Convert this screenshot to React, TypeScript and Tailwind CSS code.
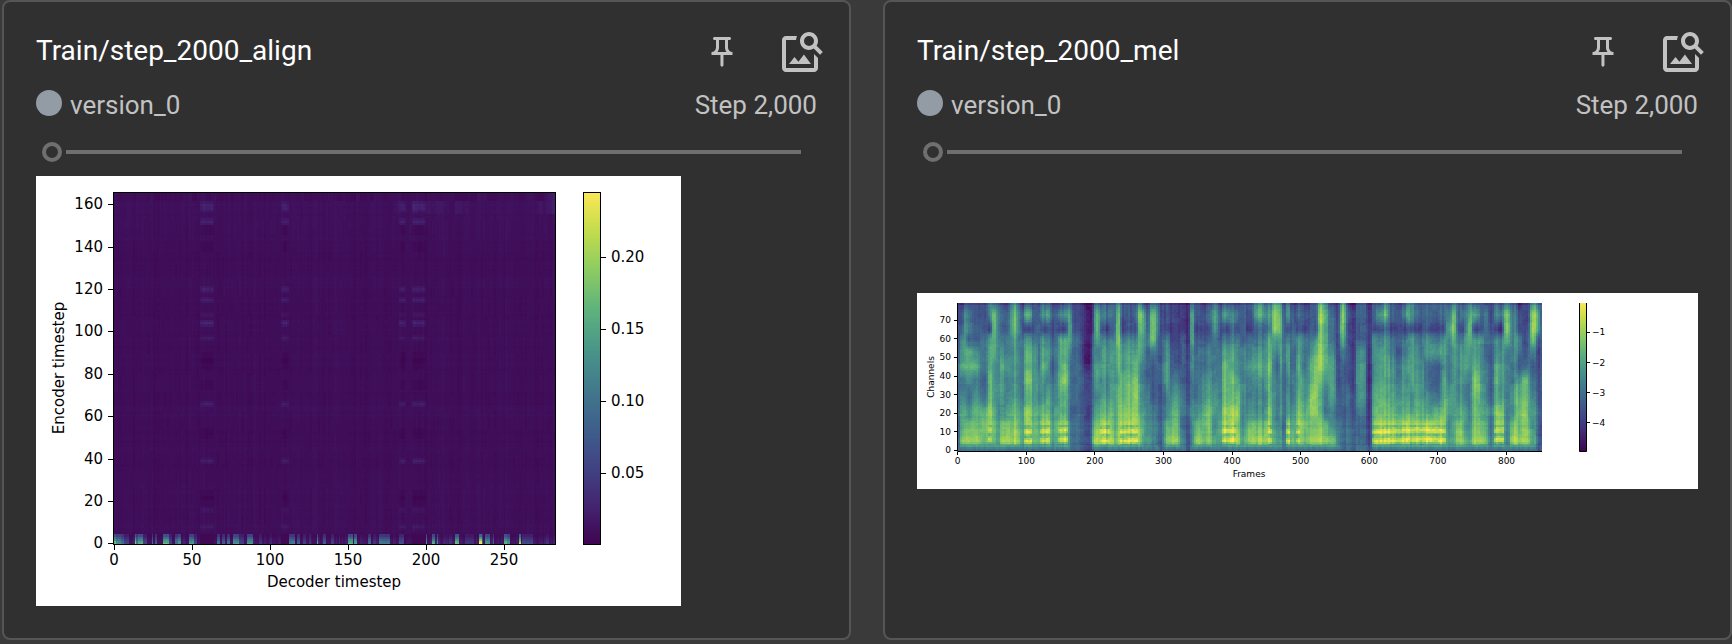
import React, { useId, useMemo, useState } from "react";

/* ---------- colour scale ---------- */

const SCALE = [
  [62, 5, 80],
  [68, 36, 113],
  [64, 68, 132],
  [63, 96, 139],
  [66, 122, 140],
  [73, 150, 137],
  [94, 178, 124],
  [139, 203, 99],
  [194, 220, 75],
  [250, 231, 85],
];
const LEVELS = 135;

function shade(value: number) {
  const v = Math.max(0, Math.min(8.999, value));
  const i = Math.floor(v);
  const t = v - i;
  const c = SCALE[i].map((a, k) => Math.round(a + (SCALE[i + 1][k] - a) * t));
  return `rgb(${c[0]},${c[1]},${c[2]})`;
}

function noise(a: number, b = 0) {
  const s = Math.sin(a * 127.1 + b * 311.7 + 17.3) * 43758.5453;
  return (s - Math.floor(s)) * 2 - 1;
}

type Cells = { cols: number; rows: number; at: (col: number, row: number) => number };

/* Cells are run-length merged and gathered in one path per colour level. */
function Heatmap({ x, y, width, height, cells }: { x: number; y: number; width: number; height: number; cells: Cells }) {
  const paths = useMemo(() => {
    const w = width / cells.cols;
    const h = height / cells.rows;
    const out = new Map<number, string[]>();
    for (let r = 0; r < cells.rows; r++) {
      let start = 0;
      let level = -1;
      for (let c = 0; c <= cells.cols; c++) {
        const v = c < cells.cols ? Math.max(0, Math.min(LEVELS, Math.round((cells.at(c, r) / 9) * LEVELS))) : -2;
        if (v !== level) {
          if (level >= 0) {
            if (!out.has(level)) out.set(level, []);
            const x0 = (x + start * w).toFixed(2);
            const x1 = (x + c * w).toFixed(2);
            out.get(level)!.push(`M${x0} ${(y + r * h).toFixed(2)}H${x1}v${h.toFixed(3)}H${x0}z`);
          }
          start = c;
          level = v;
        }
      }
    }
    return [...out.entries()];
  }, [x, y, width, height, cells]);

  return (
    <g shapeRendering="crispEdges">
      {paths.map(([level, d]) => (
        <path key={level} d={d.join("")} fill={shade((level / LEVELS) * 9)} />
      ))}
    </g>
  );
}

/* ---------- alignment data ---------- */

/* first step, last step, strength */
const PEAKS: number[][] = [
  [0, 1, 6.6], [2, 4, 5], [5, 6, 3.8], [7, 9, 2], [14, 14, 7.2], [15, 15, 4], [16, 18, 6], [19, 21, 2],
  [25, 25, 3.6], [27, 27, 3], [32, 35, 6.2], [36, 37, 2], [40, 41, 3.8], [42, 43, 5], [49, 51, 5], [52, 53, 2],
  [67, 68, 3.8], [70, 71, 3], [73, 74, 3.6], [77, 80, 5], [81, 83, 2], [86, 89, 5], [94, 95, 1.6],
  [101, 101, 1.4], [113, 116, 4], [118, 119, 3], [122, 123, 2], [126, 126, 1.6], [131, 131, 5.6], [135, 136, 3],
  [140, 141, 2], [145, 145, 1.5], [151, 153, 6], [155, 156, 5.6], [164, 165, 3.6], [167, 168, 1.6], [171, 177, 4],
  [184, 186, 2.5], [201, 201, 5], [205, 206, 5.7], [208, 208, 5], [212, 213, 1.2], [216, 217, 1.6],
  [220, 221, 6.6], [226, 231, 1.6], [235, 236, 8.8], [237, 237, 3], [239, 241, 5], [244, 244, 3.2],
  [251, 252, 6.2], [253, 254, 5], [261, 261, 8], [263, 269, 2.2], [278, 279, 1.5],
];
const PATCHES = [[56, 64], [108, 112], [184, 187], [192, 200]];
const GLOWS = [[8, 0.4], [16, 0.3], [39, 0.7], [66, 0.7], [97, 0.5], [104, 1], [108, 0.4], [115, 0.7], [120, 0.7], [152, 0.8], [158, 0.7], [160, 0.7]];
const SHADOWS = [20, 23, 52, 75, 85, 88, 140, 148];

const STRENGTH = Array.from({ length: 284 }, (_, c) => {
  const hit = PEAKS.find(([a, b]) => c >= a && c <= b);
  return hit ? hit[2] : 0.5 + Math.max(0, noise(c, 3)) * 0.6;
});

const alignment: Cells = {
  cols: 284,
  rows: 166,
  at: (c, r) => {
    const ch = 165 - r;
    const patch = PATCHES.find(([a, b]) => c >= a && c <= b);
    if (ch < 5) {
      if (patch && STRENGTH[c] < 2) return 0.1;
      const fade = [1, 0.9, 0.75, 0.55, 0.38][ch];
      return STRENGTH[c] * fade * (1 + noise(c, ch) * 0.08);
    }
    let v = 0.3 + noise(Math.floor(c / 2), 7) * 0.05 + noise(c, 1) * 0.05 + noise(ch, 50) * 0.03 + noise(Math.floor(ch / 6), 51) * 0.04;
    v += noise(c, Math.floor(ch / 9)) * 0.04;
    if (ch > 155 && ch < 162) v += 0.04 + (c > 180 ? Math.max(0, noise(Math.floor(c / 4), 9)) * 0.25 : 0);
    if (ch >= 162) v += noise(Math.floor(c / 3), 12) * 0.1 - 0.05;
    if (c > 276 && ch > 155) v += (c - 276) * 0.07;
    if (c === 201) v -= 0.15;
    if (patch) {
      const across = Math.min(c - patch[0], patch[1] - c) + 1;
      const edge = across === 1 ? 0.6 : 1;
      for (const [row, gain] of GLOWS) {
        const off = Math.abs(ch - row);
        if (off <= 1) v += gain * edge * (off === 0 ? 0.75 : 0.35) * (1 + noise(c, row) * 0.2);
      }
      for (const row of SHADOWS) if (Math.abs(ch - row) <= 2) v -= 0.15 * edge;
    }
    return v;
  },
};

/* ---------- spectrogram data ---------- */

/* right edge of a segment (thirds of a pixel from the axis), intensity from top to bottom */
const SEGMENTS: [number, string][] = [
  [7, "333344444444"], [17, "233566456784"], [25, "466666456784"], [42, "344366545784"], [67, "333356456784"],
  [89, "333444346774"], [102, "552666778884"], [115, "477665556774"], [127, "344444444554"], [139, "233456555784"],
  [157, "233445445784"], [172, "566555556784"], [187, "455455556784"], [197, "233444445664"], [224, "362566767884"],
  [239, "333455556774"], [247, "233333445564"], [262, "452566556884"], [277, "352455456884"], [300, "232343445664"],
  [329, "352666766884"], [345, "466654444554"], [372, "222333333443"], [400, "111111222332"], [410, "222454445784"],
  [427, "466545545784"], [455, "342455456884"], [467, "342455556784"], [475, "222344444564"], [485, "577766566784"],
  [527, "332455667884"], [543, "232456777884"], [555, "577665556784"], [567, "366554445664"], [579, "233433344564"],
  [593, "477743334554"], [607, "344333333444"], [619, "222333333443"], [635, "222455544674"], [667, "222233456784"],
  [685, "222333344454"], [697, "111112223332"], [707, "466655445554"], [732, "332344445784"], [762, "232344556774"],
  [782, "455444455564"], [795, "233344445664"], [817, "352456667884"], [832, "243455667884"], [849, "232444567784"],
  [865, "333344444564"], [887, "332445445784"], [917, "563456545784"], [932, "343455545784"], [944, "454667667884"],
  [965, "677543444564"], [972, "566556556564"], [982, "344444444454"], [999, "452455455884"], [1012, "233433445674"],
  [1027, "342556567884"], [1049, "232444556774"], [1067, "333456677784"], [1081, "332567777784"], [1099, "677777656784"],
  [1109, "566666544784"], [1132, "233345554574"], [1144, "222222233454"], [1162, "677643333443"], [1197, "122222233443"],
  [1227, "333355554444"], [1240, "222222222333"], [1257, "332555566884"], [1277, "352455566884"], [1292, "563555556884"],
  [1312, "332445556884"], [1332, "333434456884"], [1345, "342445556884"], [1357, "452445456884"], [1370, "553666656884"],
  [1397, "332445556884"], [1427, "332453345884"], [1453, "332453346884"], [1467, "332555667884"], [1482, "345444455564"],
  [1495, "577655555664"], [1507, "333444445784"], [1520, "342455556784"], [1532, "344555445564"], [1544, "567655444564"],
  [1567, "352556766784"], [1579, "332555556784"], [1593, "243334445674"], [1607, "222333334454"], [1622, "452556667884"],
  [1637, "341455557884"], [1655, "577644444554"], [1672, "344444455784"], [1692, "233543567784"], [1712, "222223667784"],
  [1719, "222344565784"], [1737, "577642345564"], [1749, "466322334443"], [1756, "333333333333"],
];
/* heights of the intensities above, in thirds of a pixel from the top */
const STOPS = [3, 36, 79, 111, 146, 191, 231, 281, 331, 366, 416, 441];
const MEL_COLS = 292;

function profile(col: number, row: number) {
  const pos = ((Math.max(0, Math.min(MEL_COLS - 1, col)) + 0.5) / MEL_COLS) * 1753;
  const seg = (SEGMENTS.find(([end]) => pos < end) ?? SEGMENTS[SEGMENTS.length - 1])[1];
  const y = ((row + 0.5) / 80) * 444;
  let k = 0;
  while (k < STOPS.length - 2 && y > STOPS[k + 1]) k++;
  const t = Math.max(0, Math.min(1, (y - STOPS[k]) / (STOPS[k + 1] - STOPS[k])));
  return { v: +seg[k] + (+seg[k + 1] - +seg[k]) * t, voiced: seg[9] >= "8" };
}

const mel: Cells = {
  cols: MEL_COLS,
  rows: 80,
  at: (c, r) => {
    const ch = 79 - r;
    const here = profile(c, r);
    let v = here.v * 0.6 + profile(c - 1, r).v * 0.2 + profile(c + 1, r).v * 0.2;
    v += noise(c, 2) * 0.35 + noise(Math.floor(c / 2), 21) * 0.3;
    v += noise(c, r) * 0.16 + noise(Math.floor(c / 3), Math.floor(r / 4)) * 0.2;
    if (ch > 18) v += noise(Math.floor(c / 4), Math.floor(r / 11)) * 0.3;
    if (ch === 79) v -= 0.8;
    if (ch <= 18 && ch >= 14) v -= 0.4;
    if (ch < 14 && ch > 2) {
      const drift = Math.sin(c / 7) * 0.5;
      const wave = Math.cos(((ch - 5.3 - drift) / 5.2) * Math.PI * 2);
      v += here.voiced ? wave * 0.95 - 0.65 + noise(c, ch) * 0.3 : wave * 0.15 - 0.6;
    }
    if (ch <= 2) v = Math.min(v, [3.8, 4.3, 5.4][ch] + noise(c, 4) * 0.3);
    return v;
  },
};

/* ---------- charts ---------- */

function Ramp({ id }: { id: string }) {
  return (
    <linearGradient id={id} x1="0" y1="1" x2="0" y2="0">
      {SCALE.map((c, i) => (
        <stop key={i} offset={i / 9} stopColor={`rgb(${c[0]},${c[1]},${c[2]})`} />
      ))}
    </linearGradient>
  );
}

function AlignmentChart() {
  const id = useId();
  return (
    <svg viewBox="0 0 645 430" role="img" aria-label="Alignment" className="w-[645px] max-w-full bg-white font-['DejaVu_Sans',sans-serif] text-[15px]">
      <defs><Ramp id={id} /></defs>
      <rect x="77" y="17" width="442" height="352" fill={shade(0.3)} />
      <Heatmap x={77} y={17} width={442} height={352} cells={alignment} />
      <rect x="77.500" y="16.5" width="442" height="352" fill="none" stroke="#000" />
      <rect x="547.500" y="16.5" width="17" height="352" fill={`url(#${id})`} stroke="#000" />
      {[0, 20, 40, 60, 80, 100, 120, 140, 160].map((n) => {
        const y = 367.3 - n * 2.119;
        return (
          <g key={n}>
            <path d={`M72 ${Math.round(y) + 0.5}h5`} stroke="#000" />
            <text x="67" y={y + 5} textAnchor="end">{n}</text>
          </g>
        );
      })}
      {[0, 50, 100, 150, 200, 250].map((n) => {
        const x = 78 + n * 1.56;
        return (
          <g key={n}>
            <path d={`M${Math.floor(x) + 0.5} 369v5`} stroke="#000" />
            <text x={x} y="389" textAnchor="middle">{n}</text>
          </g>
        );
      })}
      {["0.05", "0.10", "0.15", "0.20"].map((t, i) => (
        <g key={t}>
          <path d={`M565 ${297.5 - i * 72}h5`} stroke="#000" />
          <text x="575" y={302 - i * 72}>{t}</text>
        </g>
      ))}
      <text x="298" y="411" textAnchor="middle">Decoder timestep</text>
      <text transform="translate(28 192) rotate(-90)" textAnchor="middle">Encoder timestep</text>
    </svg>
  );
}

function MelChart() {
  const id = useId();
  return (
    <svg viewBox="0 0 781 196" role="img" aria-label="Mel spectrogram" className="w-full bg-white font-['DejaVu_Sans',sans-serif] text-[9px]">
      <defs><Ramp id={id} /></defs>
      <rect x="41" y="10" width="584" height="148" fill={shade(4)} />
      <Heatmap x={41} y={10} width={584} height={148} cells={mel} />
      <path d="M40.5 10V158.500H625" fill="none" stroke="#000" />
      <rect x="662.500" y="10" width="7" height="148.500" fill={`url(#${id})`} />
      <path d="M662.500 10V158.500H669.500V10" fill="none" stroke="#000" />
      {[0, 10, 20, 30, 40, 50, 60, 70].map((n) => {
        const y = 157.3 - n * 1.857;
        return (
          <g key={n}>
            <path d={`M37 ${Math.floor(y) + 0.5}h3`} stroke="#000" />
            <text x="34" y={y + 3} textAnchor="end">{n}</text>
          </g>
        );
      })}
      {[0, 100, 200, 300, 400, 500, 600, 700, 800].map((n) => {
        const x = 40.7 + n * 0.686;
        return (
          <g key={n}>
            <path d={`M${Math.floor(x) + 0.5} 159v3`} stroke="#000" />
            <text x={x} y="171" textAnchor="middle">{n}</text>
          </g>
        );
      })}
      {["−1", "−2", "−3", "−4"].map((t, i) => (
        <g key={t}>
          <path d={`M670 ${Math.floor(39.3 + i * 30.2) + 0.5}h3`} stroke="#000" />
          <text x="675" y={42.3 + i * 30.2}>{t}</text>
        </g>
      ))}
      <text x="332" y="184" textAnchor="middle">Frames</text>
      <text transform="translate(17 84) rotate(-90)" textAnchor="middle">Channels</text>
    </svg>
  );
}

/* ---------- cards ---------- */

function PinIcon() {
  return (
    <svg viewBox="0 0 24 24" className="size-9" fill="currentColor" aria-hidden="true">
      <path d="M14 4v5c0 1.120.37 2.160 1 3H9c.65-.86 1-1.900 1-3V4h4m3-2H7c-.55 0-1 .45-1 1s.45 1 1 1h1v5c0 1.660-1.340 3-3 3v2h5.970v7l1 1 1-1v-7H19v-2c-1.660 0-3-1.340-3-3V4h1c.55 0 1-.45 1-1s-.45-1-1-1z" />
    </svg>
  );
}

function ImageSearchIcon() {
  return (
    <svg viewBox="0 0 24 24" className="size-12" fill="currentColor" aria-hidden="true">
      <path d="M18 13v7H4V6h5.020c.05-.71.22-1.380.48-2H4c-1.100 0-2 .9-2 2v14c0 1.100.9 2 2 2h14c1.100 0 2-.9 2-2v-5l-2-2zm-1.500 5h-11l2.750-3.530 1.960 2.360 2.750-3.540L16.500 18zm2.800-9.110c.44-.7.7-1.510.7-2.390C20 4.010 17.990 2 15.500 2S11 4.010 11 6.500s2.010 4.500 4.490 4.500c.88 0 1.700-.26 2.390-.7L21 13.420 22.420 12 19.300 8.890zM15.500 9a2.500 2.500 0 0 1 0-5 2.500 2.500 0 0 1 0 5z" />
    </svg>
  );
}

function ImageCard({ title, children }: { title: string; children: React.ReactNode }) {
  const [step, setStep] = useState(0);
  return (
    <section className="flex min-w-0 flex-col rounded-lg border-2 border-[#555] bg-[#303030] pt-[26px] pb-8">
      <header className="flex items-start pr-[23px] pl-8 text-[#c2c2c2]">
        <h2 className="min-w-0 flex-1 truncate text-[28px] leading-[46px] text-white">{title}</h2>
        <button type="button" aria-label="Pin card" className="mt-1.5 mr-[38px]"><PinIcon /></button>
        <button type="button" aria-label="Show actual image size"><ImageSearchIcon /></button>
      </header>
      <div className="mt-[14px] flex items-start px-8 text-[26px] leading-[30px] text-[#c2c2c2]">
        <span className="mr-2 size-[26px] rounded-full bg-[#939ba5]" />
        <span className="flex-1">version_0</span>
        <span>Step 2,000</span>
      </div>
      <input
        type="range"
        aria-label="Step"
        min={0}
        max={1}
        value={step}
        onChange={(e) => setStep(Number(e.target.value))}
        className="mt-[22px] mr-12 ml-[38px] block h-5 appearance-none bg-transparent [&::-webkit-slider-runnable-track]:h-1 [&::-webkit-slider-runnable-track]:bg-[linear-gradient(to_right,transparent_24px,#6f6f6f_24px)] [&::-webkit-slider-thumb]:-mt-2 [&::-webkit-slider-thumb]:size-5 [&::-webkit-slider-thumb]:appearance-none [&::-webkit-slider-thumb]:rounded-full [&::-webkit-slider-thumb]:border-4 [&::-webkit-slider-thumb]:border-[#6f6f6f] [&::-webkit-slider-thumb]:bg-[#303030]"
      />
      <div className="mt-[14px] flex flex-1 items-center px-8">{children}</div>
    </section>
  );
}

export default function App() {
  return (
    <main className="min-h-screen bg-[#3a3a3a] pb-1 pl-0.5 font-[Roboto,sans-serif]">
      <div className="grid grid-cols-2 gap-8">
        <ImageCard title="Train/step_2000_align"><AlignmentChart /></ImageCard>
        <ImageCard title="Train/step_2000_mel"><MelChart /></ImageCard>
      </div>
    </main>
  );
}
